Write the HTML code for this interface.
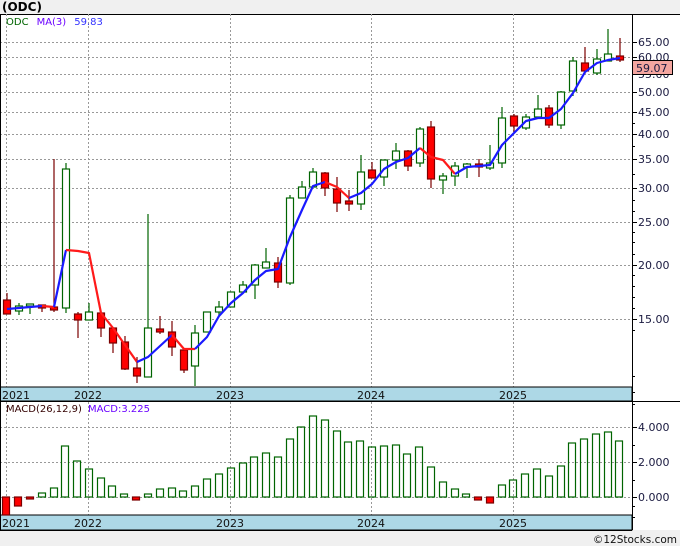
<!DOCTYPE html>
<html><head><meta charset="utf-8"><style>
html,body{margin:0;padding:0;background:#f0f0f0;}
svg{display:block;font-family:"DejaVu Sans","Liberation Sans",sans-serif;}
</style></head><body>
<svg width="680" height="546" viewBox="0 0 680 546" xmlns="http://www.w3.org/2000/svg">
<rect x="0" y="0" width="680" height="546" fill="#f0f0f0"/>
<text x="2" y="11" font-size="12" font-weight="bold" fill="#000">(ODC)</text>
<!-- main panel -->
<rect x="0" y="14" width="680" height="516" fill="#fff"/>
<line x1="0" y1="14.5" x2="680" y2="14.5" stroke="#000"/>
<g stroke="#999" stroke-dasharray="2,2" stroke-width="1">
<line x1="0" y1="42.5" x2="632" y2="42.5"/><line x1="0" y1="57.5" x2="632" y2="57.5"/>
<line x1="0" y1="74.5" x2="632" y2="74.5"/><line x1="0" y1="92.5" x2="632" y2="92.5"/>
<line x1="0" y1="112.5" x2="632" y2="112.5"/><line x1="0" y1="134.5" x2="632" y2="134.5"/>
<line x1="0" y1="159.5" x2="632" y2="159.5"/><line x1="0" y1="188.5" x2="632" y2="188.5"/>
<line x1="0" y1="222.5" x2="632" y2="222.5"/><line x1="0" y1="265.5" x2="632" y2="265.5"/>
<line x1="0" y1="319.5" x2="632" y2="319.5"/>
<line x1="6.5" y1="14" x2="6.5" y2="387"/><line x1="88.5" y1="14" x2="88.5" y2="387"/>
<line x1="230.5" y1="14" x2="230.5" y2="387"/><line x1="371.5" y1="14" x2="371.5" y2="387"/>
<line x1="513.5" y1="14" x2="513.5" y2="387"/>
<line x1="0" y1="427.5" x2="632" y2="427.5"/><line x1="0" y1="462.5" x2="632" y2="462.5"/>
<line x1="0" y1="497.5" x2="632" y2="497.5"/>
<line x1="6.5" y1="402" x2="6.5" y2="515"/><line x1="88.5" y1="402" x2="88.5" y2="515"/>
<line x1="230.5" y1="402" x2="230.5" y2="515"/><line x1="371.5" y1="402" x2="371.5" y2="515"/>
<line x1="513.5" y1="402" x2="513.5" y2="515"/>
</g>
<text x="6" y="25" font-size="10"><tspan fill="#006400">ODC</tspan><tspan fill="#6a00ff" dx="8">MA(3)</tspan><tspan fill="#3333ff" dx="8">59.83</tspan></text>
<!-- candles -->
<g id="c" stroke-width="1.2">
<g stroke="#7a0000" fill="#ff0000">
<line x1="7" y1="293" x2="7" y2="314"/><rect x="3.5" y="300" width="7" height="14"/>
<line x1="42" y1="305" x2="42" y2="312"/><rect x="38.5" y="305" width="7" height="3"/>
<line x1="54" y1="159" x2="54" y2="312"/><rect x="50.5" y="307" width="7" height="3"/>
<line x1="78" y1="312" x2="78" y2="338"/><rect x="74.5" y="314" width="7" height="6"/>
<line x1="101" y1="313" x2="101" y2="337"/><rect x="97.5" y="313" width="7" height="15"/>
<line x1="113" y1="327" x2="113" y2="353"/><rect x="109.5" y="328" width="7" height="15"/>
<line x1="125" y1="336" x2="125" y2="370"/><rect x="121.5" y="342" width="7" height="27"/>
<line x1="137" y1="357" x2="137" y2="383"/><rect x="133.5" y="368" width="7" height="8"/>
<line x1="160" y1="316" x2="160" y2="334"/><rect x="156.5" y="329" width="7" height="3"/>
<line x1="172" y1="321" x2="172" y2="356"/><rect x="168.5" y="332" width="7" height="15"/>
<line x1="184" y1="350" x2="184" y2="373"/><rect x="180.5" y="350" width="7" height="20"/>
<line x1="278" y1="257" x2="278" y2="288"/><rect x="274.5" y="263" width="7" height="19"/>
<line x1="325" y1="172" x2="325" y2="196"/><rect x="321.5" y="173" width="7" height="15"/>
<line x1="337" y1="177" x2="337" y2="212"/><rect x="333.5" y="189" width="7" height="14"/>
<line x1="349" y1="190" x2="349" y2="211"/><rect x="345.5" y="201" width="7" height="3"/>
<line x1="372" y1="162" x2="372" y2="178"/><rect x="368.5" y="170" width="7" height="8"/>
<line x1="408" y1="150" x2="408" y2="171"/><rect x="404.5" y="151" width="7" height="15"/>
<line x1="431" y1="121" x2="431" y2="188"/><rect x="427.5" y="127" width="7" height="52"/>
<line x1="479" y1="159" x2="479" y2="177"/><rect x="475.5" y="164" width="7" height="3"/>
<line x1="514" y1="114" x2="514" y2="132"/><rect x="510.5" y="116" width="7" height="10"/>
<line x1="549" y1="105" x2="549" y2="128"/><rect x="545.5" y="108" width="7" height="17"/>
<line x1="585" y1="47" x2="585" y2="74"/><rect x="581.5" y="63" width="7" height="8"/>
<line x1="620" y1="38" x2="620" y2="62"/><rect x="616.5" y="56" width="7" height="4"/>
</g>
<g stroke="#006400" fill="#fff">
<line x1="19" y1="303" x2="19" y2="315"/><rect x="15.5" y="306" width="7" height="5"/>
<line x1="30" y1="304" x2="30" y2="314"/><rect x="26.5" y="304" width="7" height="2"/>
<line x1="66" y1="163" x2="66" y2="313"/><rect x="62.5" y="169" width="7" height="139"/>
<line x1="89" y1="303" x2="89" y2="320"/><rect x="85.5" y="312" width="7" height="8"/>
<line x1="148" y1="214" x2="148" y2="377"/><rect x="144.5" y="328" width="7" height="49"/>
<line x1="195" y1="325" x2="195" y2="386"/><rect x="191.5" y="333" width="7" height="33"/>
<line x1="207" y1="312" x2="207" y2="332"/><rect x="203.5" y="312" width="7" height="20"/>
<line x1="219" y1="301" x2="219" y2="315"/><rect x="215.5" y="307" width="7" height="5"/>
<line x1="231" y1="292" x2="231" y2="307"/><rect x="227.5" y="292" width="7" height="15"/>
<line x1="243" y1="281" x2="243" y2="292"/><rect x="239.5" y="285" width="7" height="7"/>
<line x1="255" y1="264" x2="255" y2="299"/><rect x="251.5" y="265" width="7" height="20"/>
<line x1="266" y1="248" x2="266" y2="268"/><rect x="262.5" y="262" width="7" height="6"/>
<line x1="290" y1="195" x2="290" y2="285"/><rect x="286.5" y="198" width="7" height="85"/>
<line x1="302" y1="181" x2="302" y2="198"/><rect x="298.5" y="187" width="7" height="11"/>
<line x1="313" y1="168" x2="313" y2="187"/><rect x="309.5" y="172" width="7" height="15"/>
<line x1="361" y1="155" x2="361" y2="210"/><rect x="357.5" y="172" width="7" height="32"/>
<line x1="384" y1="160" x2="384" y2="186"/><rect x="380.5" y="160" width="7" height="17"/>
<line x1="396" y1="143" x2="396" y2="169"/><rect x="392.5" y="151" width="7" height="9"/>
<line x1="420" y1="127" x2="420" y2="167"/><rect x="416.5" y="129" width="7" height="34"/>
<line x1="443" y1="173" x2="443" y2="194"/><rect x="439.5" y="176" width="7" height="4"/>
<line x1="455" y1="162" x2="455" y2="186"/><rect x="451.5" y="166" width="7" height="10"/>
<line x1="467" y1="163" x2="467" y2="178"/><rect x="463.5" y="164" width="7" height="3"/>
<line x1="490" y1="145" x2="490" y2="170"/><rect x="486.5" y="163" width="7" height="5"/>
<line x1="502" y1="107" x2="502" y2="168"/><rect x="498.5" y="118" width="7" height="45"/>
<line x1="526" y1="114" x2="526" y2="130"/><rect x="522.5" y="117" width="7" height="11"/>
<line x1="538" y1="95" x2="538" y2="117"/><rect x="534.5" y="109" width="7" height="8"/>
<line x1="561" y1="91" x2="561" y2="129"/><rect x="557.5" y="92" width="7" height="33"/>
<line x1="573" y1="57" x2="573" y2="96"/><rect x="569.5" y="61" width="7" height="30"/>
<line x1="597" y1="49" x2="597" y2="75"/><rect x="593.5" y="59" width="7" height="14"/>
<line x1="608" y1="29" x2="608" y2="61"/><rect x="604.5" y="54" width="7" height="7"/>
</g>
</g>
<!-- MA line -->
<g fill="none" stroke-width="2.2" stroke-linejoin="round">
<polyline stroke="#1a1aff" points="7,309 19,308 30,307 42,306"/>
<polyline stroke="#ff1a1a" points="42,306 54,307"/>
<polyline stroke="#1a1aff" points="54,307 66,250"/>
<polyline stroke="#ff1a1a" points="66,250 78,251 89,253 101,313 113,328 125,345 137,362"/>
<polyline stroke="#1a1aff" points="137,362 148,357 160,346 172,335"/>
<polyline stroke="#ff1a1a" points="172,335 184,349 195,349"/>
<polyline stroke="#1a1aff" points="195,349 207,337 219,316 231,303 243,293 255,280 266,271 278,269 290,237 302,210 313,186 325,182"/>
<polyline stroke="#ff1a1a" points="325,182 337,187 349,198"/>
<polyline stroke="#1a1aff" points="349,198 361,193 372,184 384,169 396,162 408,158 420,148"/>
<polyline stroke="#ff1a1a" points="420,148 431,157 443,160 455,174"/>
<polyline stroke="#1a1aff" points="455,174 467,167 479,166 490,165 502,145 514,133 526,121 538,118 549,118 561,109 573,93 585,72 597,63 608,60 620,58"/>
</g>
<!-- date strips -->
<rect x="0" y="387" width="632" height="14" fill="#add8e6" stroke="#000"/>
<rect x="0" y="515" width="632" height="15" fill="#add8e6" stroke="#000"/>
<g font-size="11" fill="#111">
<text x="2" y="399">2021</text><text x="74" y="399">2022</text><text x="216" y="399">2023</text><text x="357" y="399">2024</text><text x="499" y="399">2025</text>
<text x="2" y="527">2021</text><text x="74" y="527">2022</text><text x="216" y="527">2023</text><text x="357" y="527">2024</text><text x="499" y="527">2025</text>
</g>
<line x1="0" y1="401.5" x2="680" y2="401.5" stroke="#000"/>
<text x="6" y="412" font-size="10" fill="#330000">MACD(26,12,9)</text>
<text x="88" y="412" font-size="10" fill="#6a00ff">MACD:3.225</text>
<!-- MACD bars -->
<g stroke="#7a0000" fill="#ff0000" stroke-width="1.2">
<rect x="2.5" y="497" width="7" height="18"/><rect x="14.5" y="497" width="7" height="9"/>
<rect x="26.5" y="497" width="7" height="2"/><rect x="132.5" y="497" width="7" height="3"/>
<rect x="474.5" y="497" width="7" height="3"/><rect x="486.5" y="497" width="7" height="6"/>
</g>
<g stroke="#006400" fill="none" stroke-width="1.2">
<rect x="38.5" y="493" width="7" height="4"/><rect x="50.5" y="488" width="7" height="9"/>
<rect x="61.5" y="446" width="7" height="51"/><rect x="73.5" y="461" width="7" height="36"/>
<rect x="85.5" y="469" width="7" height="28"/><rect x="97.5" y="478" width="7" height="19"/>
<rect x="108.5" y="486" width="7" height="11"/><rect x="120.5" y="494" width="7" height="3"/>
<rect x="144.5" y="494" width="7" height="3"/><rect x="156.5" y="489" width="7" height="8"/>
<rect x="168.5" y="488" width="7" height="9"/><rect x="179.5" y="491" width="7" height="6"/>
<rect x="191.5" y="486" width="7" height="11"/><rect x="203.5" y="479" width="7" height="18"/>
<rect x="215.5" y="474" width="7" height="23"/><rect x="227.5" y="468" width="7" height="29"/>
<rect x="239.5" y="463" width="7" height="34"/><rect x="250.5" y="457" width="7" height="40"/>
<rect x="262.5" y="453" width="7" height="44"/><rect x="274.5" y="457" width="7" height="40"/>
<rect x="286.5" y="439" width="7" height="58"/><rect x="297.5" y="427" width="7" height="70"/>
<rect x="309.5" y="416" width="7" height="81"/><rect x="321.5" y="420" width="7" height="77"/>
<rect x="333.5" y="431" width="7" height="66"/><rect x="344.5" y="442" width="7" height="55"/>
<rect x="356.5" y="441" width="7" height="56"/><rect x="368.5" y="447" width="7" height="50"/>
<rect x="380.5" y="446" width="7" height="51"/><rect x="392.5" y="445" width="7" height="52"/>
<rect x="403.5" y="454" width="7" height="43"/><rect x="415.5" y="447" width="7" height="50"/>
<rect x="427.5" y="467" width="7" height="30"/><rect x="439.5" y="482" width="7" height="15"/>
<rect x="451.5" y="489" width="7" height="8"/><rect x="462.5" y="494" width="7" height="3"/>
<rect x="498.5" y="485" width="7" height="12"/><rect x="509.5" y="480" width="7" height="17"/>
<rect x="521.5" y="474" width="7" height="23"/><rect x="533.5" y="469" width="7" height="28"/>
<rect x="545.5" y="476" width="7" height="21"/><rect x="557.5" y="466" width="7" height="31"/>
<rect x="568.5" y="443" width="7" height="54"/><rect x="580.5" y="439" width="7" height="58"/>
<rect x="592.5" y="434" width="7" height="63"/><rect x="604.5" y="432" width="7" height="65"/>
<rect x="615.5" y="441" width="7" height="56"/>
</g>
<!-- axes -->
<line x1="0.5" y1="14" x2="0.5" y2="530" stroke="#000"/>
<line x1="632.5" y1="14" x2="632.5" y2="530" stroke="#000"/>
<line x1="0" y1="530.5" x2="632" y2="530.5" stroke="#000"/>
<g stroke="#000">
<line x1="632" y1="42.5" x2="637" y2="42.5"/><line x1="632" y1="57.5" x2="637" y2="57.5"/>
<line x1="632" y1="74.5" x2="637" y2="74.5"/><line x1="632" y1="92.5" x2="637" y2="92.5"/>
<line x1="632" y1="112.5" x2="637" y2="112.5"/><line x1="632" y1="134.5" x2="637" y2="134.5"/>
<line x1="632" y1="159.5" x2="637" y2="159.5"/><line x1="632" y1="188.5" x2="637" y2="188.5"/>
<line x1="632" y1="222.5" x2="637" y2="222.5"/><line x1="632" y1="265.5" x2="637" y2="265.5"/>
<line x1="632" y1="319.5" x2="637" y2="319.5"/>
<line x1="632" y1="123.5" x2="635" y2="123.5"/><line x1="632" y1="146.5" x2="635" y2="146.5"/>
<line x1="632" y1="174.5" x2="635" y2="174.5"/><line x1="632" y1="200.5" x2="635" y2="200.5"/>
<line x1="632" y1="211.5" x2="635" y2="211.5"/><line x1="632" y1="232.5" x2="635" y2="232.5"/>
<line x1="632" y1="242.5" x2="635" y2="242.5"/><line x1="632" y1="254.5" x2="635" y2="254.5"/>
<line x1="632" y1="275.5" x2="635" y2="275.5"/><line x1="632" y1="286.5" x2="635" y2="286.5"/>
<line x1="632" y1="297.5" x2="635" y2="297.5"/><line x1="632" y1="308.5" x2="635" y2="308.5"/>
<line x1="632" y1="330.5" x2="635" y2="330.5"/><line x1="632" y1="376.5" x2="635" y2="376.5"/>
<line x1="632" y1="392.5" x2="635" y2="392.5"/><line x1="632" y1="404.5" x2="635" y2="404.5"/>
<line x1="632" y1="427.5" x2="637" y2="427.5"/><line x1="632" y1="462.5" x2="637" y2="462.5"/>
<line x1="632" y1="497.5" x2="637" y2="497.5"/>
<line x1="632" y1="445.5" x2="635" y2="445.5"/><line x1="632" y1="480.5" x2="635" y2="480.5"/>
<line x1="632" y1="506.5" x2="635" y2="506.5"/><line x1="632" y1="517.5" x2="635" y2="517.5"/>
</g>
<g font-size="11" fill="#1a1a40">
<text x="638" y="46">65.00</text><text x="638" y="61">60.00</text><text x="638" y="78">55.00</text>
<text x="638" y="96">50.00</text><text x="638" y="116">45.00</text><text x="638" y="138">40.00</text>
<text x="638" y="163">35.00</text><text x="638" y="192">30.00</text><text x="638" y="226">25.00</text>
<text x="638" y="269">20.00</text><text x="638" y="323">15.00</text>
<text x="638" y="431">4.000</text><text x="638" y="466">2.000</text><text x="638" y="501">0.000</text>
</g>
<rect x="632.5" y="60.5" width="40" height="14" fill="#f4a6a0" stroke="#000"/>
<text x="636" y="72" font-size="11" fill="#1a1a40">59.07</text>
<rect x="0" y="531" width="680" height="15" fill="#f0f0f0"/>
<text x="677" y="543" font-size="10.5" fill="#111" text-anchor="end">©12Stocks.com</text>
</svg>
</body></html>
